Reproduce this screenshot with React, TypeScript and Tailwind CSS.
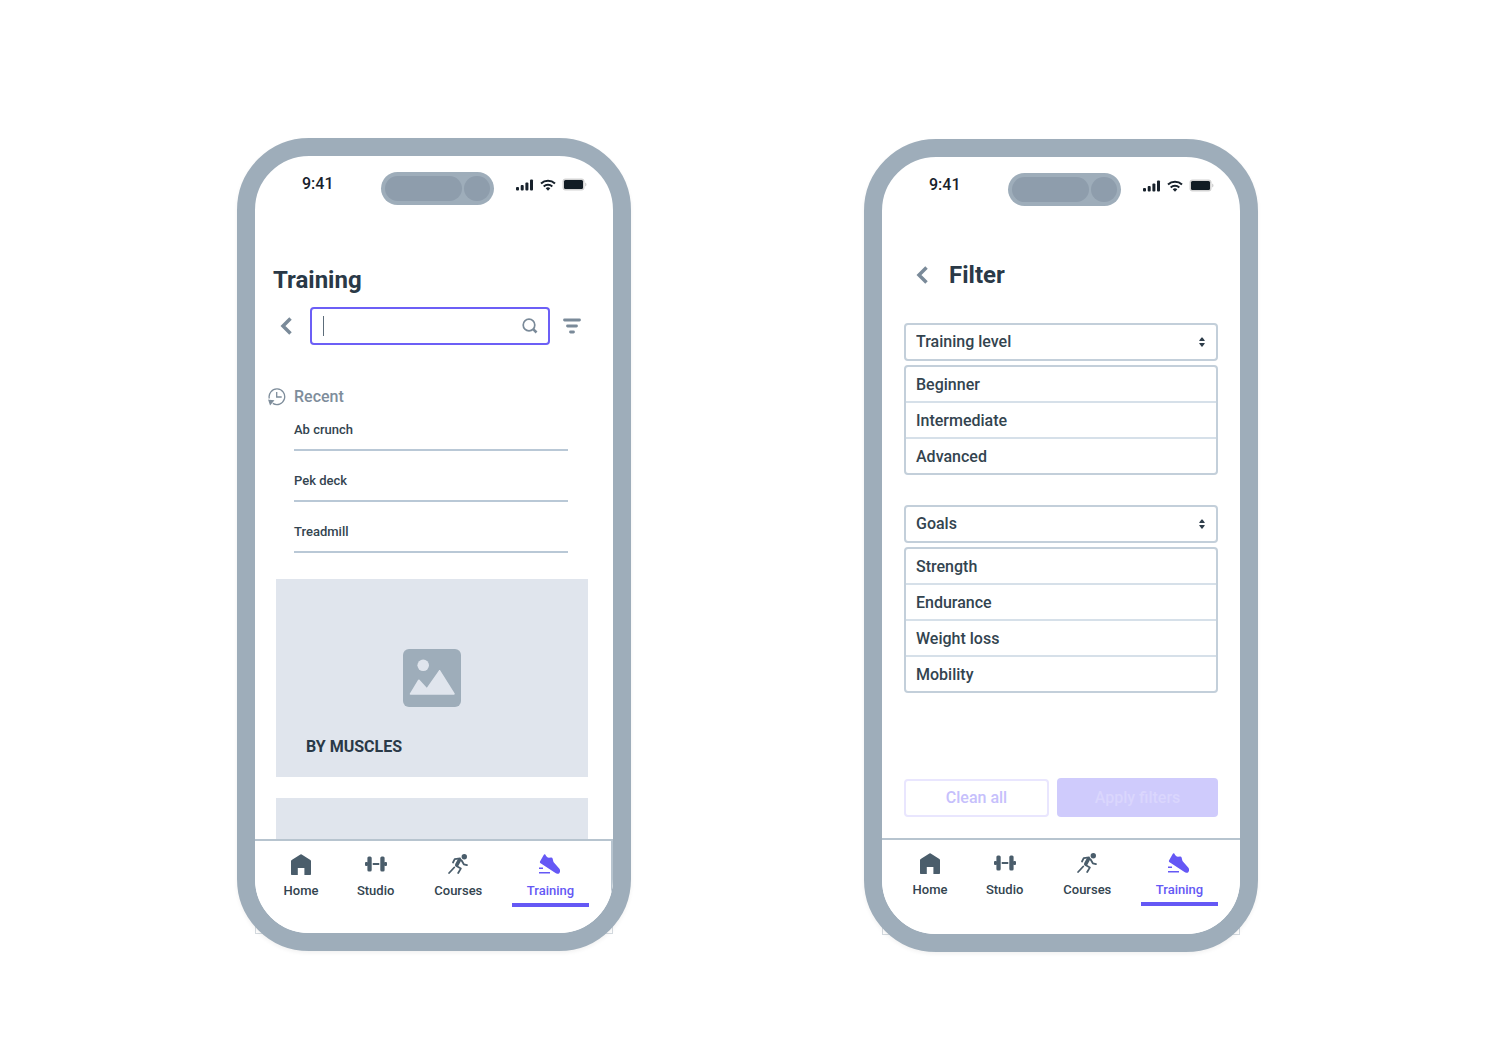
import type { ReactNode } from "react";
import { clsx } from "clsx";

type IconProps = { className?: string };

const recentSearches = ["Ab crunch", "Pek deck", "Treadmill"];

const filterGroups = [
  { id: "level", label: "Training level", options: ["Beginner", "Intermediate", "Advanced"] },
  { id: "goals", label: "Goals", options: ["Strength", "Endurance", "Weight loss", "Mobility"] },
];

function HomeIcon({ className }: IconProps) {
  return (
    <svg viewBox="0 0 20 21" className={className} fill="currentColor" aria-hidden="true">
      <path d="M.7 6.1 9.4.4a1.2 1.2 0 0 1 1.3 0l8.7 5.7c.4.3.6.6.6 1.1V20c0 .6-.4 1-1 1h-5.6v-7H6.800v7H1c-.6 0-1-.4-1-1V7.200c0-.5.3-.8.7-1.1Z" />
    </svg>
  );
}

function BarbellIcon({ className }: IconProps) {
  return (
    <svg viewBox="0 0 22 16" className={className} fill="currentColor" aria-hidden="true">
      <rect x="2.400" y=".5" width="4.300" height="15" rx="1.500" />
      <rect x="15.300" y=".5" width="4.300" height="15" rx="1.500" />
      <rect x="0" y="6" width="3" height="4" rx="1" />
      <rect x="19" y="6" width="3" height="4" rx="1" />
      <rect x="7.700" y="7" width="6.600" height="2" rx=".5" />
    </svg>
  );
}

function SprintIcon({ className }: IconProps) {
  return (
    <svg
      viewBox="0 0 20 20"
      className={className}
      fill="none"
      stroke="currentColor"
      strokeWidth="1.800"
      strokeLinecap="round"
      strokeLinejoin="round"
      aria-hidden="true"
    >
      <circle cx="16.300" cy="2.800" r="2.700" fill="currentColor" stroke="none" />
      <path d="M5 8.500 6.700 5.200 12 4.300" />
      <path d="M11.500 5.800 8.800 10.800" strokeWidth="3.600" />
      <path d="m8.500 12 4.300 2.600-2.600 4.400" />
      <path d="m13.500 6.300 2.300 4 3.200.8" />
      <path d="m1.100 19 5.100-5.500" />
    </svg>
  );
}

function ShoeIcon({ className }: IconProps) {
  return (
    <svg viewBox="0 0 22 20" className={className} fill="currentColor" aria-hidden="true">
      <path d="M1 7.500 4.700.9c.4-.7 1.300-.8 1.700-.1.700 1.400 1.900 2.900 3.600 2.900l2-.3c.8-.1 1.400.3 1.600 1.100l.9 3.600 5.700 6.500c.8.9 1.100 2.200.7 3.300-.3 1.200-1.300 2-2.500 1.900-.7 0-1.300-.3-1.900-.7L1.600 9.300C1 8.900.7 8.200 1 7.500Z" />
      <path d="M0 13.500h4v1.600H0zM0 17.900h11v1.700H0z" />
    </svg>
  );
}

function ChevronIcon() {
  return (
    <svg viewBox="0 0 12 18" className="h-[18px] w-3" fill="none" stroke="currentColor" strokeWidth="3.500" aria-hidden="true">
      <path d="M10.500 1.500 3 9l7.500 7.500" />
    </svg>
  );
}

function SearchIcon() {
  return (
    <svg viewBox="0 0 16 16" className="h-4 w-4 shrink-0" fill="none" stroke="currentColor" aria-hidden="true">
      <circle cx="7" cy="7" r="5.800" strokeWidth="1.700" />
      <path d="m11.200 11.200 3.300 3.300" strokeWidth="2.600" />
    </svg>
  );
}

function FilterIcon() {
  return (
    <svg viewBox="0 0 18 16" className="h-4 w-[18px]" stroke="currentColor" strokeWidth="2.800" strokeLinecap="round" aria-hidden="true">
      <path d="M1.500 2h15M4.500 8h9M7.500 14h3" />
    </svg>
  );
}

function HistoryIcon() {
  return (
    <svg viewBox="0 0 18 18" className="h-[18px] w-[18px]" fill="none" stroke="currentColor" strokeWidth="1.300" aria-hidden="true">
      <path d="M1.300 10.500A7.800 7.800 0 1 1 4.800 15.400" />
      <path d="M8.700 4v5h5" />
      <path d="M1 12.300 5.200 12.800 2.300 16.200Z" fill="currentColor" />
    </svg>
  );
}

function PictureIcon() {
  return (
    <svg viewBox="0 0 58 58" className="h-[58px] w-[58px]" aria-hidden="true">
      <rect width="58" height="58" rx="6" fill="#9eadba" />
      <g fill="#e0e5ed">
        <circle cx="20.200" cy="16.300" r="5.800" />
        <path d="M7 44.200 15 31c.4-.7 1-.7 1.500-.2l7.300 8 12.100-17.300c.4-.6 1-.6 1.400 0l14.300 22.700c.4.700.1 1.500-.7 1.500H7.500c-.8 0-1-.800-.5-1.500Z" />
      </g>
    </svg>
  );
}

function StatusBar() {
  return (
    <div className="flex h-[33px] items-center pl-[47px] pr-[26px] text-[#17212b]">
      <span className="w-[79px] pb-2.5 text-base font-medium leading-5">9:41</span>
      <div className="flex h-[33px] w-[113px] items-center justify-between rounded-full bg-[#9eadba] px-1">
        <span className="h-[25px] w-[77px] rounded-full bg-[#8e9dac]" />
        <span className="h-[25px] w-[26px] rounded-full bg-[#8e9dac]" />
      </div>
      <div className="ml-auto flex items-center gap-1.5 pb-2">
        <svg viewBox="0 0 18 12" className="h-3 w-[18px]" fill="currentColor" aria-hidden="true">
          <rect x="0" y="8" width="3" height="3.500" rx="1" />
          <rect x="4.700" y="6" width="3" height="5.500" rx="1" />
          <rect x="9.400" y="3.500" width="3" height="8" rx="1" />
          <rect x="14" y=".5" width="3" height="11" rx="1" />
        </svg>
        <svg viewBox="0 0 16 12" className="h-3 w-4" fill="none" stroke="currentColor" strokeWidth="2" aria-hidden="true">
          <path d="M1 4.600a10.300 10.300 0 0 1 14 0M3.700 7.400a6.300 6.300 0 0 1 8.600 0" />
          <path d="M5.700 9.300a3.500 3.500 0 0 1 4.600 0L8 11.700Z" fill="currentColor" stroke="none" />
        </svg>
        <svg viewBox="0 0 25 13" className="h-[13px] w-[25px]" aria-hidden="true">
          <rect x=".5" y=".5" width="22" height="12" rx="3" fill="#d3d3d3" />
          <path d="M23.200 4.500c1.700.6 1.700 3.400 0 4Z" fill="#c9c9c9" />
          <rect x="2" y="2" width="19" height="9" rx="1.500" fill="#111c24" />
        </svg>
      </div>
    </div>
  );
}

const tabs = [
  { label: "Home", icon: <HomeIcon className="h-[21px] w-5" />, width: "w-[54px]" },
  { label: "Studio", icon: <BarbellIcon className="h-4 w-[22px]" />, width: "w-[58px]" },
  { label: "Courses", icon: <SprintIcon className="h-5 w-5" />, width: "w-[70px]" },
  { label: "Training", icon: <ShoeIcon className="h-5 w-[22px]" />, width: "w-[77px]", active: true },
];

function TabBar({ className }: { className?: string }) {
  return (
    <nav className={clsx("flex justify-between border-t-2 border-[#b7c4cf] bg-white pt-[11px]", className)}>
      {tabs.map((tab) => (
        <a
          key={tab.label}
          href={`#${tab.label.toLowerCase()}`}
          aria-current={tab.active ? "page" : undefined}
          className={clsx(
            "flex flex-col items-center border-b-4 text-[13px] font-medium leading-5",
            tab.width,
            tab.active ? "border-[#6558f5] text-[#6558f5]" : "border-transparent text-[#33444f]",
          )}
        >
          <span className={clsx("flex h-6 items-center", !tab.active && "text-[#4a5d6b]")}>{tab.icon}</span>
          <span className="mb-0.5 mt-[5px]">{tab.label}</span>
        </a>
      ))}
    </nav>
  );
}

function Phone({ className, children }: { className?: string; children: ReactNode }) {
  return (
    <div className={clsx("relative isolate w-[394px]", className)}>
      {/* screen edge that peeks out behind the rounded frame */}
      <div className="absolute inset-x-[18px] bottom-[17px] -z-10 h-10 border border-t-0 border-[#d5dbe0]" />
      <div className="flex flex-col overflow-hidden rounded-[72px] border-[18px] border-[#9eadba] bg-white pt-4 shadow-[0_2px_4px_rgba(0,0,0,0.06)]">
        <StatusBar />
        {children}
      </div>
    </div>
  );
}

function TrainingScreen() {
  return (
    <Phone>
      <main className="flex flex-col pt-[59px]">
        <h1 className="pl-[18px] text-2xl font-bold leading-8 text-[#2a3947]">Training</h1>
        <div className="mt-[11px] flex items-center pl-[25px] pr-8 text-[#7a8a99]">
          <button type="button" aria-label="Back">
            <ChevronIcon />
          </button>
          <label className="ml-[18px] flex h-[38px] min-w-0 flex-1 items-center rounded border-2 border-[#6c5ff6] pl-[11px] pr-2.5">
            <span className="h-5 w-px shrink-0 bg-[#5c6c7a]" />
            <input type="text" aria-label="Search training" className="min-w-0 flex-1 outline-none" />
            <SearchIcon />
          </label>
          <button type="button" aria-label="Filters" className="ml-[13px]">
            <FilterIcon />
          </button>
        </div>

        <section className="mt-10 pl-[13px]">
          <h2 className="flex items-center gap-2 text-base font-medium leading-6 text-[#7e8d9b]">
            <HistoryIcon />
            Recent
          </h2>
          <ul className="ml-[26px] mr-[45px] text-[13px] font-medium leading-5 text-[#33444f]">
            {recentSearches.map((item) => (
              <li key={item} className="h-[51px] border-b-2 border-[#b9c8d6] pt-5 first:h-[42px] first:pt-[11px]">
                {item}
              </li>
            ))}
          </ul>
        </section>

        <div className="mt-[26px] flex flex-col gap-[21px] pl-[21px] pr-[25px]">
          <article className="flex h-[198px] flex-col bg-[#e0e5ed] pt-[70px]">
            <div className="flex justify-center">
              <PictureIcon />
            </div>
            <h3 className="ml-[30px] mt-[30px] text-base font-bold leading-5 text-[#2a3947]">BY MUSCLES</h3>
          </article>
          <div className="h-[41px] bg-[#e0e5ed]" />
        </div>
      </main>
      <TabBar className="border-r-2 pb-[26px] pl-[19px] pr-[22px]" />
    </Phone>
  );
}

function FilterGroup({ id, label, options }: { id: string; label: string; options: string[] }) {
  return (
    <div className="flex flex-col gap-1 text-base font-medium leading-5 text-[#33444f]">
      <div className="relative">
        <select
          id={id}
          aria-label={label}
          className="block h-[38px] w-full appearance-none rounded border-2 border-[#c3cfda] bg-white px-2.5"
        >
          <option>{label}</option>
        </select>
        <svg viewBox="0 0 6 10" className="pointer-events-none absolute right-[13px] top-3.5 h-2.5 w-1.5" fill="#2f3e4b" aria-hidden="true">
          <path d="M.4 3.200 2.500.6c.3-.3.7-.3 1 0l2.100 2.600c.3.400.1.800-.4.800H.8c-.5 0-.7-.400-.4-.8ZM.4 6.800l2.100 2.600c.3.300.7.300 1 0l2.100-2.600c.3-.4.1-.8-.4-.8H.8c-.5 0-.7.400-.4.8Z" />
        </svg>
      </div>
      <ul className="divide-y-2 divide-[#d6e0e9] rounded border-2 border-[#c3cfda]">
        {options.map((option) => (
          <li key={option}>
            <button type="button" className="block w-full px-2.5 pb-1.5 pt-2 text-left">
              {option}
            </button>
          </li>
        ))}
      </ul>
    </div>
  );
}

function FilterScreen() {
  return (
    <Phone className="mt-px">
      <main className="flex flex-col px-[22px] pt-[53px]">
        <div className="flex items-center gap-[21px] pl-3">
          <button type="button" aria-label="Back" className="text-[#7a8a99]">
            <ChevronIcon />
          </button>
          <h1 className="text-2xl font-bold leading-8 text-[#2a3947]">Filter</h1>
        </div>
        <div className="mt-8 flex flex-col gap-[30px]">
          {filterGroups.map((group) => (
            <FilterGroup key={group.id} {...group} />
          ))}
        </div>
        <div className="mb-[21px] mt-[85px] flex items-end gap-2 text-base font-medium">
          <button type="button" disabled className="h-[38px] w-[145px] rounded border-2 border-[#e9e6fe] text-[#c6c0fc]">
            Clean all
          </button>
          <button type="button" disabled className="h-[39px] flex-1 rounded bg-[#cfcbfc] text-[#dad6fd]">
            Apply filters
          </button>
        </div>
      </main>
      <TabBar className="pb-7 pl-[21px] pr-[22px]" />
    </Phone>
  );
}

export default function App() {
  return (
    <div className="flex min-h-screen items-start justify-center gap-[233px] bg-white pb-20 pr-[5px] pt-[138px] font-['Roboto','Liberation_Sans',sans-serif]">
      <TrainingScreen />
      <FilterScreen />
    </div>
  );
}
